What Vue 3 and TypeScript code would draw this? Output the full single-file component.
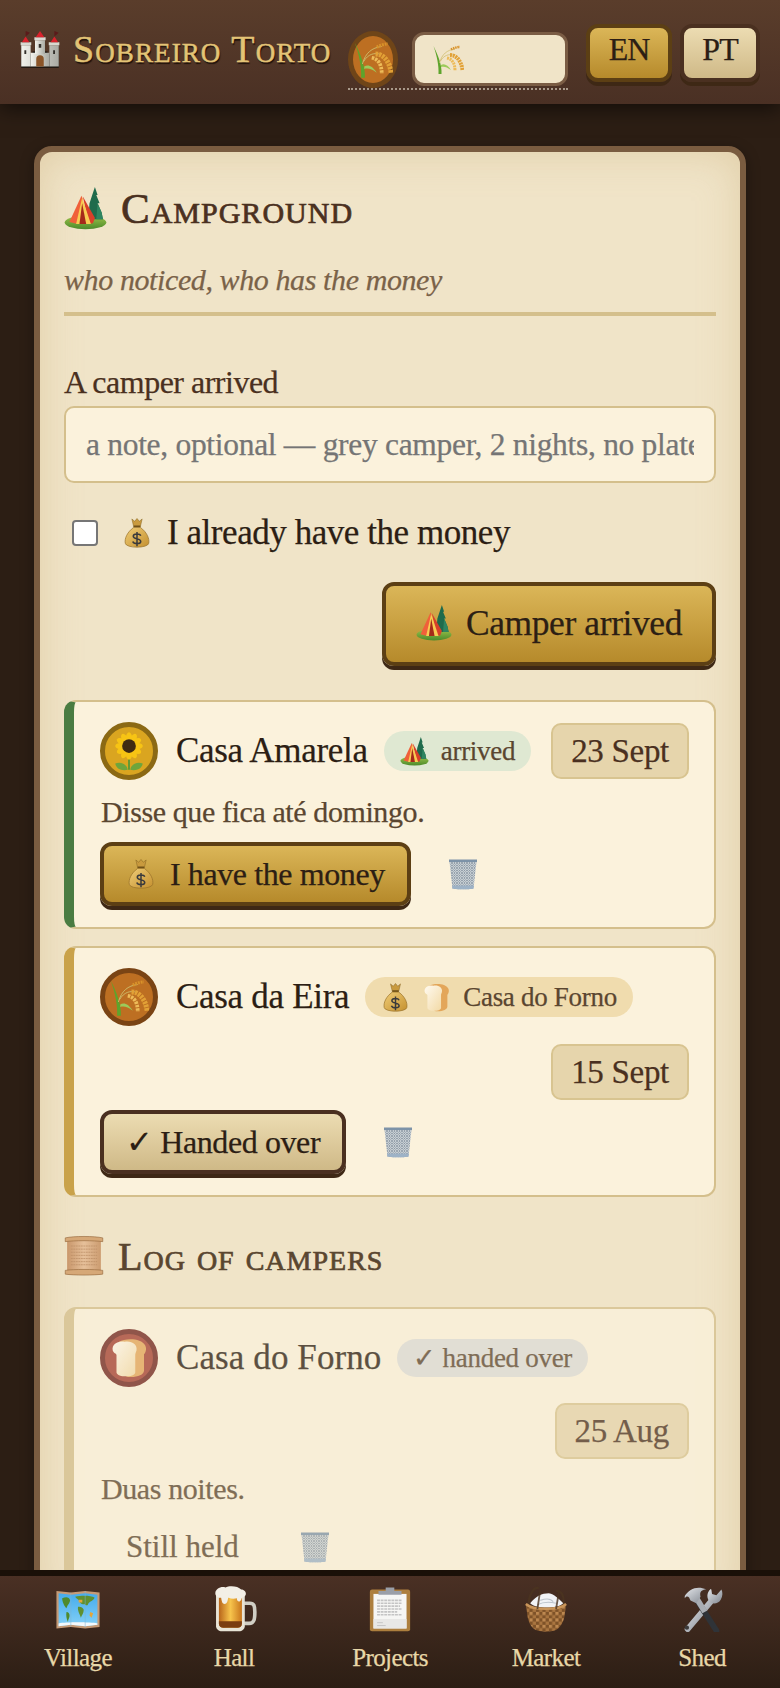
<template>
  <svg class="sprite" xmlns="http://www.w3.org/2000/svg" aria-hidden="true">
    <defs>
      <linearGradient id="g-grass" x1="0" y1="0" x2="0" y2="1"><stop offset="0" stop-color="#9bc24a" /><stop offset="1" stop-color="#4b8a2a" /></linearGradient>
      <linearGradient id="g-bag" x1="0" y1="0" x2="1" y2="1"><stop offset="0" stop-color="#f0cd78" /><stop offset="1" stop-color="#c4902f" /></linearGradient>
      <linearGradient id="g-loaf" x1="0" y1="0" x2="1" y2="1"><stop offset="0" stop-color="#fffaf0" /><stop offset="1" stop-color="#f2d9a4" /></linearGradient>
      <linearGradient id="g-beer" x1="0" y1="0" x2="1" y2="0"><stop offset="0" stop-color="#b8651a" /><stop offset=".5" stop-color="#f7c44c" /><stop offset="1" stop-color="#c9761c" /></linearGradient>
      <linearGradient id="g-stone" x1="0" y1="0" x2="1" y2="0"><stop offset="0" stop-color="#f2f2ec" /><stop offset="1" stop-color="#a9aaa3" /></linearGradient>
      <linearGradient id="g-sea" x1="0" y1="0" x2="0" y2="1"><stop offset="0" stop-color="#45abec" /><stop offset="1" stop-color="#83d0f7" /></linearGradient>
      <linearGradient id="g-parch" x1="0" y1="0" x2="1" y2="0"><stop offset="0" stop-color="#c9976b" /><stop offset=".5" stop-color="#e6c09a" /><stop offset="1" stop-color="#cc9c70" /></linearGradient>
      <linearGradient id="g-steel" x1="0" y1="0" x2="1" y2="1"><stop offset="0" stop-color="#e4e6ea" /><stop offset="1" stop-color="#7f858e" /></linearGradient>
      <pattern id="p-mesh" width="5" height="5" patternUnits="userSpaceOnUse"><path d="M0 0L5 5M5 0L0 5" stroke="#6a7b8a" stroke-width="1.200" fill="none" /></pattern>
      <pattern id="p-weave" width="9" height="9" patternUnits="userSpaceOnUse"><rect width="9" height="9" fill="#7e5228" /><rect width="4.500" height="4.500" fill="#bd8850" /><rect x="4.500" y="4.500" width="4.500" height="4.500" fill="#a97540" /></pattern>
    </defs>

    <symbol id="e-castle" viewBox="0 0 64 64">
      <path d="M2 60V26h14v12h4v-4h4v4h16v-4h4v4h4V26h14v34z" fill="#14100c" transform="translate(0 2)" />
      <path d="M2 26h15v34H2zM47 26h15v34H47z" fill="url(#g-stone)" />
      <path d="M17 38h30v22H17z" fill="url(#g-stone)" />
      <path d="M24 18h16v22H24z" fill="url(#g-stone)" />
      <path d="M1 26h17v-5H1zM46 26h17v-5H46zM23 18h18v-5H23z" fill="#d8d8d0" />
      <path d="M3 21l6-9 6 9zM49 21l6-9 6 9zM25 13l7-10 7 10z" fill="#d9222c" />
      <path d="M9 12V3l7 3zM55 12V3l7 3z" fill="#5a1a1a" />
      <path d="M26 60V48a6 6 0 0 1 12 0v12z" fill="#8a5428" />
      <path d="M7 34h3v6H7zM53 34h3v6h-3zM30 24h4v6h-4z" fill="#33302c" />
    </symbol>

    <symbol id="e-wheat" viewBox="0 0 64 64">
      <path d="M13 62C14 46 10 26 3 6c9 18 17 38 16 56z" fill="#5da42c" />
      <path d="M18 44c6-4 14 0 20 10-8-6-14-8-20-6z" fill="#9ccb5a" />
      <path d="M15 40C20 22 30 14 46 12M17 36c7-12 17-14 25-12" fill="none" stroke="#cdbb6a" stroke-width="1.500" />
      <path d="M38 13c6-3 12-5 18-5" fill="none" stroke="#d8922a" stroke-width="5" stroke-dasharray="3 1.500" />
      <path d="M36 24c12 0 22 10 25 30" fill="none" stroke="#e2a136" stroke-width="8" stroke-dasharray="4 1.500" />
      <path d="M30 30c10 2 16 10 16 26" fill="none" stroke="#edbb58" stroke-width="6" stroke-dasharray="4 1.500" />
    </symbol>

    <symbol id="e-sun" viewBox="0 0 64 64">
      <path d="M32 36V62" stroke="#5d9a34" stroke-width="3" />
      <path d="M30 62C22 64 12 62 10 52c8-3 18 0 20 10zM34 62c8 2 18 0 20-10-8-3-18 0-20 10z" fill="#6ea53c" />
      <ellipse v-for="a in petals" :key="a" cx="32" cy="11" rx="5" ry="9" fill="#f7c414" :transform="`rotate(${a} 32 24)`" />
      <circle cx="32" cy="24" r="11" fill="#3f2a12" />
    </symbol>

    <symbol id="e-bag" viewBox="0 0 64 64">
      <path d="M21 2l6 5 5-6 5 6 6-5-4 17H25z" fill="#c99a3e" stroke="#7e5e1e" stroke-width="1" />
      <path d="M25 16h14v4H25z" fill="#6d4f18" />
      <path d="M25 20C11 30 5 44 7 54c2 11 48 11 50 0 2-10-4-24-18-34z" fill="url(#g-bag)" stroke="#97702a" stroke-width="1.500" />
      <path d="M40 38c-2-5-16-5-16 1 0 7 16 4 16 11 0 6-15 6-17 0M32 30v30" fill="none" stroke="#3a3a3c" stroke-width="3.200" />
    </symbol>

    <symbol id="e-tent" viewBox="0 0 64 64">
      <ellipse cx="32" cy="53" rx="31" ry="10" fill="url(#g-grass)" />
      <path d="M46 0l4 12h-2l5 12h-3l6 14 2 10H36l2-24 4-12z" fill="#1f6b4c" />
      <path d="M50 24l6 14 2 10H48z" fill="#2f8560" />
      <path d="M26 13L8 52l12 3 8-37z" fill="#f0603a" />
      <path d="M28 14l18 32-3 8-6 1z" fill="#d9402a" />
      <path d="M27 16l-9 39 22 0z" fill="#f8cc52" />
      <path d="M27 24l-4 31 10 0z" fill="#a52a1a" />
    </symbol>

    <symbol id="e-bread" viewBox="0 0 64 64">
      <path d="M16 6C26 0 52 0 58 12c3 6 0 12-2 14v26c0 8-14 12-28 10z" fill="#e3a65a" />
      <path d="M6 20C4 10 14 4 25 6c11-2 21 4 19 14-1 3-2 5-2 7v28c-1 8-28 9-30 0V27c0-2-5-3-6-7z" fill="url(#g-loaf)" />
    </symbol>

    <symbol id="e-trash" viewBox="0 0 64 64">
      <path d="M5 7h54l-6 54c-2 2-40 2-42 0z" fill="#e4e8ea" />
      <path d="M5 7h54l-6 54c-2 2-40 2-42 0z" fill="url(#p-mesh)" />
      <path d="M4 3h56v5H4z" fill="#7d93a8" />
      <path d="M10 55h44l-1 6c-2 2-40 2-42 0z" fill="#9db2c6" />
    </symbol>

    <symbol id="e-scroll" viewBox="0 0 64 64">
      <path d="M5 6h54v52H5z" fill="url(#g-parch)" />
      <path d="M2 3c14-3 46-3 60 0v6C48 7 16 7 2 9zM2 55c14-2 46-2 60 0v6c-14 2-46 2-60 0z" fill="#d6a877" stroke="#94663c" stroke-width="1" />
      <path d="M11 16h42M11 21h42M11 26h42M11 31h42M11 36h42M11 41h42M11 46h42" stroke="#bb8e66" stroke-width="1.200" stroke-dasharray="3 1" />
    </symbol>

    <symbol id="e-map" viewBox="0 0 64 64">
      <path d="M2 7l20 2 20-2 20 2v48l-20 2-20-2-20 2z" fill="#c59a76" />
      <path d="M5 10l17 2 20-2 17 2v42l-17 2-20-2-17 2z" fill="url(#g-sea)" />
      <path d="M10 17c5-2 10-2 11 3-1 5-4 6-5 11-3-3-6-9-6-14zM16 36c3 0 5 3 4 7-1 3-2 5-2 7-2-4-3-10-2-14z" fill="#4f8a2c" />
      <path d="M28 15c8-2 22-2 27 1-1 5-7 5-9 9 0 3-4 2-5 0-4 1-6-1-7-3 0-3-4-4-6-7zM32 29c3-1 7 1 8 4 0 5-3 8-4 11-1-4-5-9-4-15z" fill="#5f9030" />
      <path d="M33 19h5v4h-5zM49 36l4 2-2 6-3-3z" fill="#e4a53a" />
      <path d="M5 52c10-2 44-2 54 0v2l-17 2-20-2-17 2z" fill="#f3f8fb" />
      <path d="M22 9v48M42 7v50" stroke="#7fb2d2" stroke-width="1" opacity=".7" />
    </symbol>

    <symbol id="e-beer" viewBox="0 0 64 64">
      <path d="M46 24h8c6 0 7 4 7 12 0 10-1 16-8 16h-7" fill="none" stroke="#d0cec4" stroke-width="5" />
      <path d="M7 12h40v44c0 4-4 7-8 7H15c-4 0-8-3-8-7z" fill="#e8e4d6" />
      <path d="M11 16h32v36c0 4-3 6-6 6H17c-3 0-6-2-6-6z" fill="url(#g-beer)" />
      <path d="M11 49h32v3c0 4-3 6-6 6H17c-3 0-6-2-6-6z" fill="#7a3d10" />
      <path d="M6 10C6 4 14 0 20 2c6-3 18-2 22 3 4 0 8 4 6 8-2 3-5 2-6 6-2 4-6 3-6-2-4 1-8 1-12-1-1 6-2 9-5 9-4 0-4-5-5-9-4 1-8-2-8-6z" fill="#f3efe6" />
    </symbol>

    <symbol id="e-clip" viewBox="0 0 64 64">
      <rect x="4" y="5" width="56" height="58" rx="3" fill="#ad7f3e" />
      <rect x="9" y="11" width="46" height="48" fill="#f6f6f4" />
      <path d="M9 46h46v13H9z" fill="#e8e8e6" />
      <path d="M14 20h34M14 24h34M14 28h32M14 32h34M14 36h28M14 40h34" stroke="#c4c4c4" stroke-width="2.400" stroke-dasharray="4 1" />
      <path d="M14 51h8M14 55h12" stroke="#c0c0c0" stroke-width="1.200" />
      <path d="M16 12V7h10V2h12v5h10v5z" fill="#9a9fa8" />
    </symbol>

    <symbol id="e-basket" viewBox="0 0 64 64">
      <path d="M8 26C8 10 16 1 22 3M56 28C58 14 54 6 46 7" fill="none" stroke="#4a3320" stroke-width="3" />
      <path d="M10 24c8-10 16-14 26-14 8 2 12 6 20 14-8 8-38 8-46 0z" fill="#f1f3f6" />
      <path d="M24 20c6-2 14-4 18 2M20 26c8-4 18-4 26-2" fill="none" stroke="#bcc4cc" stroke-width="1.500" />
      <path d="M4 26c10 8 46 8 56 0l-2 14c-1 10-7 20-14 22-7 2-17 2-24 0-8-2-13-12-14-22z" fill="url(#p-weave)" />
      <path d="M4 25c10 9 46 9 56 0" fill="none" stroke="#c9955a" stroke-width="3.500" />
      <path d="M24 6l-4 26M50 8l-4 24" stroke="#4a3320" stroke-width="2.500" opacity=".8" />
    </symbol>

    <symbol id="e-tools" viewBox="0 0 64 64">
      <path d="M44 22L12 60" stroke="url(#g-steel)" stroke-width="8" stroke-linecap="round" />
      <circle cx="11" cy="58" r="3" fill="#3b3a3a" />
      <path d="M44 4c-6 5-6 14 0 19 5 3 11 1 14-4 3-5 3-10 1-14l-7 8-6-2-1-6z" fill="url(#g-steel)" />
      <path d="M24 18L52 62" stroke="#2f3338" stroke-width="8" stroke-linecap="round" />
      <path d="M25 18L36 36" stroke="#a9adb3" stroke-width="8" />
      <path d="M8 14C14 4 26-1 38 5c-6 0-10 3-8 10l-6 9-8-4-2-4c-2-2-4-2-6 1z" fill="url(#g-steel)" />
    </symbol>
  </svg>

  <div class="page">
    <header class="topbar">
      <svg class="emo castle"><use href="#e-castle" /></svg>
      <h1 class="brand">Sobreiro Torto</h1>
      <div class="who">
        <span class="avatar av-head"><svg class="emo"><use href="#e-wheat" /></svg></span>
        <div class="picker"><svg class="emo"><use href="#e-wheat" /></svg></div>
      </div>
      <div class="langs">
        <button v-for="l in langs" :key="l" class="btn lang" :class="lang === l ? 'btn-gold' : 'btn-pale'" type="button" @click="lang = l">{{ l }}</button>
      </div>
    </header>

    <main class="scroller">
      <section class="panel">
        <h2 class="title"><svg class="emo title-ico"><use href="#e-tent" /></svg>Campground</h2>
        <p class="subtitle">who noticed, who has the money</p>

        <label class="field-label" for="note">A camper arrived</label>
        <input id="note" v-model="note" class="note-input" type="text" placeholder="a note, optional — grey camper, 2 nights, no plate" />

        <label class="check-row">
          <input v-model="held" type="checkbox" class="check" />
          <svg class="emo check-bag"><use href="#e-bag" /></svg>
          <span>I already have the money</span>
        </label>

        <div class="submit-row">
          <button class="btn btn-gold submit" type="button"><svg class="emo"><use href="#e-tent" /></svg>Camper arrived</button>
        </div>

        <div class="stack">
          <article v-for="c in open" :key="c.house" class="camp" :class="c.edge">
            <div class="camp-head">
              <span class="avatar" :class="c.av"><svg class="emo"><use :href="c.icon" /></svg></span>
              <span class="house">{{ c.house }}</span>
              <span class="pill" :class="c.pill">
                <svg v-for="p in c.pillIcons" :key="p" class="emo"><use :href="p" /></svg>{{ c.pillText }}
              </span>
              <span class="date">{{ c.date }}</span>
            </div>
            <p v-if="c.text" class="camp-note">{{ c.text }}</p>
            <div class="camp-actions">
              <button class="btn act" :class="c.btnClass" type="button">
                <svg v-if="c.btnIcon" class="emo"><use :href="c.btnIcon" /></svg>{{ c.btnText }}
              </button>
              <svg class="emo bin"><use href="#e-trash" /></svg>
            </div>
          </article>
        </div>

        <h3 class="title title-log"><svg class="emo log-ico"><use href="#e-scroll" /></svg>Log of campers</h3>

        <article class="camp camp-old">
          <div class="camp-head">
            <span class="avatar av-bread"><svg class="emo"><use href="#e-bread" /></svg></span>
            <span class="house">Casa do Forno</span>
            <span class="pill pill-grey">✓ handed over</span>
            <span class="date">25 Aug</span>
          </div>
          <p class="camp-note">Duas noites.</p>
          <div class="camp-actions held-row">
            <span class="held">Still held</span>
            <svg class="emo bin"><use href="#e-trash" /></svg>
          </div>
        </article>
      </section>
    </main>

    <nav class="tabs">
      <a v-for="t in tabs" :key="t.label" class="tab">
        <svg class="emo"><use :href="t.icon" /></svg>
        <span>{{ t.label }}</span>
      </a>
    </nav>
  </div>
</template>

<script setup lang="ts">
import { ref } from 'vue'

const petals: number[] = Array.from({ length: 12 }, (_, i) => i * 30)
const langs = ['EN', 'PT']
const lang = ref<string>('EN')
const note = ref<string>('')
const held = ref<boolean>(false)

const open = [
  {
    house: 'Casa Amarela', icon: '#e-sun', av: 'av-sun', edge: 'edge-green',
    pill: 'pill-green', pillIcons: ['#e-tent'], pillText: 'arrived', date: '23 Sept',
    text: 'Disse que fica até domingo.',
    btnClass: 'btn-gold', btnIcon: '#e-bag', btnText: 'I have the money'
  },
  {
    house: 'Casa da Eira', icon: '#e-wheat', av: 'av-wheat', edge: 'edge-gold',
    pill: 'pill-sand', pillIcons: ['#e-bag', '#e-bread'], pillText: 'Casa do Forno', date: '15 Sept',
    text: '',
    btnClass: 'btn-pale', btnIcon: '', btnText: '✓ Handed over'
  }
]

const tabs = [
  { label: 'Village', icon: '#e-map' },
  { label: 'Hall', icon: '#e-beer' },
  { label: 'Projects', icon: '#e-clip' },
  { label: 'Market', icon: '#e-basket' },
  { label: 'Shed', icon: '#e-tools' }
]
</script>

<style>
html, body {
  margin: 0;
  background: #2c1e14;
}
</style>

<style scoped>
.sprite {
  display: block;
  width: 0;
  height: 0;
}

.page {
  height: 1688px;
  display: flex;
  flex-direction: column;
  overflow: hidden;
  font-family: "Liberation Serif", serif;
  -webkit-text-stroke: 0.25px currentColor;
  color: #2c1e14;
}

.emo {
  display: block;
  flex: none;
}

.topbar {
  flex: none;
  height: 104px;
  box-sizing: border-box;
  display: flex;
  align-items: center;
  padding: 0 20px 0 22px;
  background: linear-gradient(#5a3d2b, #4a3024);
  box-shadow: 0 4px 20px rgba(0, 0, 0, 0.6);
  position: relative;
  z-index: 2;
}

.castle {
  width: 40px;
  height: 40px;
  margin: -6px 0 0 -2px;
}

.brand {
  margin: -7px 0 0 13px;
  width: 275px;
  flex: none;
  font-size: 38px;
  font-weight: 400;
  font-variant: small-caps;
  letter-spacing: 1.1px;
  -webkit-text-stroke: 0.5px currentColor;
  color: #e3c476;
  text-shadow: 1px 2px 1px #1e120a;
  white-space: nowrap;
}

.who {
  flex: none;
  display: flex;
  align-items: center;
  gap: 14px;
  width: 220px;
  height: 60px;
  box-sizing: border-box;
  border-bottom: 2px dotted #a8998a;
  margin-top: 16px;
}

.avatar {
  flex: none;
  width: 58px;
  height: 58px;
  box-sizing: border-box;
  border-radius: 50%;
  border: 5px solid;
  display: flex;
  align-items: center;
  justify-content: center;
}

.avatar .emo {
  width: 40px;
  height: 40px;
}

.av-head {
  width: 50px;
  height: 57px;
  background: #bd6f22;
  border-color: #6f4518;
}

.av-sun {
  background: #daa520;
  border-color: #8b6914;
}

.av-wheat {
  background: #bd6f22;
  border-color: #7a4414;
}

.av-bread {
  background: #a54133;
  border-color: #712620;
}

.picker {
  width: 156px;
  height: 54px;
  box-sizing: border-box;
  border: 3px solid #7a5c44;
  border-radius: 12px;
  background: #f0e4c8;
  display: flex;
  align-items: center;
  padding-left: 17px;
}

.picker .emo {
  width: 32px;
  height: 32px;
}

.langs {
  display: flex;
  gap: 8px;
  margin-left: auto;
  margin-top: 2px;
}

.btn {
  font-family: inherit;
  color: #2c1e14;
  border: 4px solid;
  border-radius: 12px;
  display: flex;
  align-items: center;
  justify-content: center;
  padding: 0;
}

.btn-gold {
  background: linear-gradient(#dbb658, #b68a2b);
  border-color: #5c3f14;
  box-shadow: 0 4px 0 #3e2815;
}

.btn-pale {
  background: linear-gradient(#ecdcb2, #cfb987);
  border-color: #4a3020;
  box-shadow: 0 4px 0 #3e2815;
}

.lang {
  height: 58px;
  width: 86px;
  font-size: 32px;
  padding-bottom: 8px;
  letter-spacing: -1px;
}

.lang.btn-pale {
  width: 80px;
}

.scroller {
  flex: 1;
  min-height: 0;
  overflow: hidden;
  padding: 42px 34px 0;
  background: #2c1e14;
}

.panel {
  border: 6px solid #7a5c40;
  border-radius: 18px;
  padding: 24px;
  background: #f0e4c8;
  box-shadow: inset 0 0 40px rgba(196, 164, 104, 0.35), 0 4px 14px rgba(0, 0, 0, 0.35);
}

.title {
  margin: 2px 0 0;
  height: 60px;
  display: flex;
  align-items: center;
  gap: 14px;
  font-size: 43px;
  font-weight: 400;
  font-variant: small-caps;
  letter-spacing: 1px;
  -webkit-text-stroke: 0.7px currentColor;
  color: #4a3020;
}

.title-ico {
  width: 43px;
  height: 43px;
}

.subtitle {
  margin: 22px 0 0;
  height: 52px;
  line-height: 40px;
  border-bottom: 4px solid #d4bf8c;
  font-size: 30px;
  font-style: italic;
  color: #7a6248;
  letter-spacing: -0.4px;
}

.field-label {
  display: block;
  margin-top: 46px;
  height: 44px;
  line-height: 40px;
  font-size: 32px;
  letter-spacing: -0.5px;
  color: #4a3020;
}

.note-input {
  display: block;
  width: 100%;
  height: 77px;
  box-sizing: border-box;
  padding: 0 20px;
  border: 2px solid #d4bf8c;
  border-radius: 10px;
  background: #fbf2dc;
  font-family: inherit;
  font-size: 31.500px;
  letter-spacing: -0.3px;
  color: #2c1e14;
  outline: none;
}

.note-input::placeholder {
  color: #757575;
  opacity: 1;
}

.check-row {
  display: flex;
  align-items: center;
  height: 40px;
  margin-top: 30px;
  padding-left: 8px;
  font-size: 35px;
  letter-spacing: -0.45px;
}

.check {
  appearance: none;
  width: 26px;
  height: 26px;
  box-sizing: border-box;
  margin: 0 24px 0 0;
  border: 2px solid #767676;
  border-radius: 4px;
  background: #fff;
}

.check-bag {
  width: 30px;
  height: 32px;
  margin-right: 15px;
}

.submit-row {
  display: flex;
  justify-content: flex-end;
  margin-top: 29px;
}

.submit {
  width: 334px;
  height: 84px;
  gap: 14px;
  font-size: 35.500px;
  letter-spacing: -0.4px;
  padding-bottom: 2px;
}

.submit .emo {
  width: 36px;
  height: 36px;
}

.stack {
  display: flex;
  flex-direction: column;
  gap: 17px;
  margin-top: 34px;
}

.camp {
  border: 2px solid #d4bf8c;
  border-left-width: 10px;
  border-radius: 12px;
  padding: 20px 25px 17px 26px;
  background: #fbf2dc;
}

.edge-green {
  border-left-color: #4a7c42;
}

.edge-gold {
  border-left-color: #c9a24a;
}

.camp-old {
  opacity: 0.75;
  margin-top: 21px;
}

.camp-old .camp-head {
  row-gap: 16px;
}

.camp-old .camp-note {
  margin-top: 8px;
}

.camp-old .house {
  letter-spacing: 0.1px;
}

.camp-head {
  display: flex;
  flex-wrap: wrap;
  align-items: center;
  row-gap: 18px;
}

.house {
  margin-left: 18px;
  font-size: 35px;
  letter-spacing: -0.3px;
}

.pill {
  display: flex;
  align-items: center;
  gap: 12px;
  height: 40px;
  margin-left: 16px;
  padding: 0 16px;
  border-radius: 20px;
  font-size: 27px;
  letter-spacing: -0.3px;
  color: #5a4630;
}

.pill .emo {
  width: 29px;
  height: 29px;
}

.pill-green {
  background: #dfe8d2;
}

.pill-sand {
  background: #f0dcae;
}

.pill-grey {
  background: #dddcd8;
  height: 38px;
}

.date {
  margin-left: auto;
  height: 56px;
  box-sizing: border-box;
  padding: 0 18px;
  display: flex;
  align-items: center;
  border: 2px solid #d8c490;
  border-radius: 10px;
  background: #e6d5ac;
  font-size: 33px;
  letter-spacing: -0.3px;
  color: #4a3020;
}

.camp-note {
  margin: 10px 0 8px 1px;
  height: 44px;
  line-height: 44px;
  font-size: 30px;
  letter-spacing: -0.4px;
  color: #5a4630;
}

.camp-head + .camp-actions {
  margin-top: 10px;
}

.camp-actions {
  display: flex;
  align-items: center;
  gap: 36px;
  padding-bottom: 4px;
}

.act {
  height: 64px;
  padding: 0 22px;
  gap: 14px;
  font-size: 32px;
  letter-spacing: -0.4px;
}

.act .emo {
  width: 30px;
  height: 32px;
}

.bin {
  width: 32px;
  height: 32px;
}

.title-log {
  margin-top: 29px;
  font-size: 40px;
  color: #5a4630;
}

.log-ico {
  width: 40px;
  height: 42px;
}

.held-row {
  margin-top: 18px;
  gap: 60px;
}

.held {
  margin-left: 26px;
  font-size: 31px;
  color: #5a4630;
}

.tabs {
  flex: none;
  height: 118px;
  box-sizing: border-box;
  display: grid;
  grid-template-columns: repeat(5, 1fr);
  border-top: 6px solid #1a1008;
  background: linear-gradient(#4a3024, #2c1e14);
  position: relative;
  z-index: 2;
}

.tab {
  display: flex;
  flex-direction: column;
  align-items: center;
  padding-top: 10px;
  gap: 12px;
  font-size: 25px;
  letter-spacing: -0.6px;
  color: #e8d8a8;
}

.tab .emo {
  width: 48px;
  height: 46px;
}
</style>
